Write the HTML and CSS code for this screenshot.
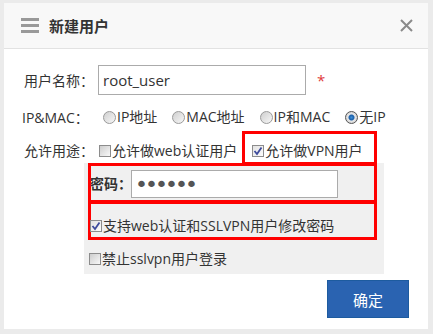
FILE: index.html
```html
<!DOCTYPE html>
<html lang="zh-CN">
<head>
    <meta charset="UTF-8">
    <meta name="viewport" content="width=device-width, initial-scale=1.0">
    <title>新建用户</title>
    <link rel="stylesheet" href="styles.css">
</head>
<body>

    <div class="dialog">
        <div class="dialog-header">
            <span class="menu-icon"><i></i><i></i><i></i></span>
            <h3 class="dialog-title">新建用户</h3>
            <span class="close-btn">
                <svg width="13" height="13" viewBox="0 0 13 13"><path d="M1 1 L12 12 M12 1 L1 12" stroke="#8a8a8a" stroke-width="2" fill="none"/></svg>
            </span>
        </div>

        <form class="user-form">
            <div class="row">
                <label class="row-label" for="username">用户名称：</label>
                <input type="text" id="username" class="text-input" value="root_user">
                <span class="required">*</span>
            </div>

            <div class="row">
                <span class="row-label latin">IP&amp;MAC：</span>
                <label class="option"><span class="radio"></span>IP地址</label>
                <label class="option"><span class="radio"></span>MAC地址</label>
                <label class="option"><span class="radio"></span>IP和MAC</label>
                <label class="option"><span class="radio checked"></span>无IP</label>
            </div>

            <div class="row row-usage">
                <span class="row-label">允许用途：</span>
                <label class="option usage-web"><span class="check"></span>允许做web认证用户</label>
                <label class="option mark mark-vpn"><span class="check checked"><svg width="10" height="10" viewBox="0 0 10 10"><path d="M1.5 5 L4 8 L8.5 1.5" stroke="#3d4b9c" stroke-width="1.8" fill="none"/></svg></span>允许做VPN用户</label>
            </div>

            <div class="vpn-panel">
                <div class="mark mark-password">
                    <label class="pwd-label" for="password">密码：</label>
                    <input type="password" id="password" class="text-input pwd-input" value="123456">
                </div>
                <div class="mark mark-change">
                    <label class="option"><span class="check checked"><svg width="10" height="10" viewBox="0 0 10 10"><path d="M1.5 5 L4 8 L8.5 1.5" stroke="#3d4b9c" stroke-width="1.8" fill="none"/></svg></span>支持web认证和SSLVPN用户修改密码</label>
                </div>
                <label class="option option-ban"><span class="check"></span>禁止sslvpn用户登录</label>
            </div>

            <div class="form-footer">
                <button type="button" class="btn-ok">确定</button>
            </div>
        </form>
    </div>

</body>
</html>
```

FILE: styles.css
```css
body {
    margin: 0;
    background-color: #ebebeb;
    font-family: "Open Sans", "Noto Sans CJK SC", sans-serif;
    font-size: 14px;
    color: #333;
}
.dialog {
    width: 424px;
    height: 326px;
    margin: 3px 0 0 4px;
    background-color: #fff;
}
.dialog-header {
    display: flex;
    align-items: center;
    height: 45px;
    padding: 0 15px 0 17px;
    background-color: #f8f8f8;
    border-bottom: 1px solid #e2e2e2;
}
.menu-icon {
    display: flex;
    flex-direction: column;
    gap: 3px;
    width: 18px;
}
.menu-icon i {
    display: block;
    height: 3px;
    background-color: #999;
}
.dialog-title {
    margin: 0 0 0 10px;
    font-size: 15px;
    font-weight: bold;
    color: #333;
}
.close-btn {
    display: flex;
    margin-left: auto;
}
.user-form {
    padding: 16px 0 0 20px;
}
.row {
    display: flex;
    align-items: center;
    height: 30px;
}
.row + .row {
    margin-top: 7px;
}
.row-label {
    width: 74px;
    flex-shrink: 0;
    white-space: nowrap;
}
.row-label.latin {
    margin-left: -2px;
    width: 76px;
}
.text-input {
    box-sizing: border-box;
    width: 208px;
    height: 30px;
    margin: 0;
    padding: 0 4px;
    border: 1px solid #ababab;
    font-family: "Open Sans", "Noto Sans CJK SC", sans-serif;
    font-size: 15px;
    color: #333;
}
.text-input:focus {
    outline: none;
}
.required {
    margin-left: 11px;
    color: #e03a3a;
    font-size: 15px;
}
.option {
    display: inline-flex;
    align-items: center;
    line-height: 20px;
    white-space: nowrap;
}
.radio {
    box-sizing: border-box;
    width: 13px;
    height: 13px;
    margin: 0 1px 0 5px;
    border: 1px solid #9a9a9a;
    border-radius: 50%;
    background: linear-gradient(135deg, #cfcfcf, #f7f7f7);
}
.row .option {
    margin-right: 10px;
}
.radio.checked {
    border-color: #555;
    background: radial-gradient(circle, #3d8fd6 0, #1c5fa8 2.5px, #e8e8e8 3.5px, #d0d0d0 6px);
}
.check {
    box-sizing: border-box;
    display: inline-flex;
    align-items: center;
    justify-content: center;
    width: 12px;
    height: 12px;
    margin-right: 1px;
    border: 1px solid #8c8c8c;
    background: linear-gradient(135deg, #cdcdcd, #f8f8f8);
}
.check.checked {
    background: linear-gradient(135deg, #e2e2e2, #fcfcfc);
}
.row-usage {
    align-items: flex-start;
    height: 32px;
    margin-top: -1px !important;
}
.row-usage .row-label {
    margin-top: 10px;
    line-height: 20px;
}
.row .usage-web {
    margin: 10px 5px 0 1px;
}
.mark {
    box-sizing: border-box;
    border: 3px solid #f00;
}
.row .mark-vpn {
    height: 34px;
    margin: 0;
    padding: 5px 11px 0 7px;
}
.vpn-panel {
    width: 300px;
    margin-left: 60px;
    padding: 0 0 5px 4px;
    box-sizing: border-box;
    background-color: #f0f0f0;
}
.mark-password {
    display: flex;
    align-items: flex-start;
    width: 289px;
    height: 40px;
    padding-top: 4px;
}
.pwd-label {
    flex-shrink: 0;
    width: 41px;
    margin-left: -1px;
    line-height: 28px;
    font-weight: bold;
    white-space: nowrap;
}
.pwd-input {
    width: 207px;
    height: 28px;
    padding-left: 3px;
    font-family: "DejaVu Sans", sans-serif;
    font-size: 22px;
    letter-spacing: -3px;
    color: #555;
}
.mark-change {
    width: 289px;
    height: 39px;
    margin-top: -2px;
    padding-top: 12px;
}
.mark-change .check {
    margin-left: -1px;
}
.option-ban {
    margin: 9px 0 0 1px;
}
.form-footer {
    display: flex;
    justify-content: flex-end;
    padding-right: 19px;
    margin-top: 6px;
}
.btn-ok {
    width: 82px;
    height: 38px;
    border: 1px solid #1d5b9f;
    background-color: #2a63b1;
    color: #fff;
    font-family: "Noto Sans CJK SC", sans-serif;
    font-size: 15px;
    cursor: pointer;
}
```
